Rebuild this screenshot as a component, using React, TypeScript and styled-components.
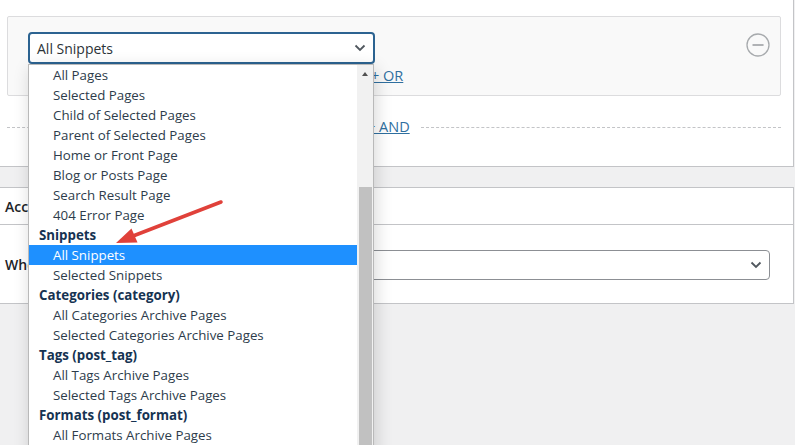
import styled, { createGlobalStyle } from 'styled-components';

type OptionItem = {
  label: string;
  group?: boolean;
  selected?: boolean;
};

const options: OptionItem[] = [
  { label: 'All Pages' },
  { label: 'Selected Pages' },
  { label: 'Child of Selected Pages' },
  { label: 'Parent of Selected Pages' },
  { label: 'Home or Front Page' },
  { label: 'Blog or Posts Page' },
  { label: 'Search Result Page' },
  { label: '404 Error Page' },
  { label: 'Snippets', group: true },
  { label: 'All Snippets', selected: true },
  { label: 'Selected Snippets' },
  { label: 'Categories (category)', group: true },
  { label: 'All Categories Archive Pages' },
  { label: 'Selected Categories Archive Pages' },
  { label: 'Tags (post_tag)', group: true },
  { label: 'All Tags Archive Pages' },
  { label: 'Selected Tags Archive Pages' },
  { label: 'Formats (post_format)', group: true },
  { label: 'All Formats Archive Pages' },
];

const GlobalStyle = createGlobalStyle`
  html, body {
    margin: 0;
    padding: 0;
  }
  body {
    background: #f0f0f1;
    font-family: 'Open Sans', 'Noto Sans', sans-serif;
    color: #1d2327;
    overflow: hidden;
  }
`;

const Page = styled.div`
  position: relative;
  width: 795px;
  height: 445px;
  overflow: hidden;
`;

const TopPanel = styled.section`
  box-sizing: border-box;
  width: 794px;
  height: 167px;
  padding: 16px 12px 0 7px;
  background: #fff;
  border-right: 1px solid #c3c4c7;
  border-bottom: 1px solid #c3c4c7;
`;

const GroupBox = styled.div`
  box-sizing: border-box;
  height: 80px;
  display: flex;
  justify-content: space-between;
  align-items: flex-start;
  padding: 15px 10px 0 20px;
  background: #f9f9f9;
  border: 1px solid #dcdcde;
  border-radius: 2px;
`;

const RuleColumn = styled.div`
  display: flex;
  flex-direction: column;
  align-items: flex-start;
`;

const SelectWrap = styled.div`
  position: relative;
  width: 347px;
`;

const Select = styled.div<{ $focused?: boolean }>`
  box-sizing: border-box;
  height: ${(p) => (p.$focused ? 32 : 30)}px;
  display: flex;
  align-items: center;
  justify-content: space-between;
  padding: 0 7px 0 7px;
  border: ${(p) => (p.$focused ? '2px solid #2c6391' : '1px solid #8c8f94')};
  border-radius: 4px;
  background: #fff;
  font-size: 14px;
  color: #2c3338;
`;

const Chevron = () => (
  <svg width="12" height="8" viewBox="0 0 12 8">
    <polyline points="1.5,1.5 6,6 10.5,1.5" fill="none" stroke="#50575e" strokeWidth="1.8" />
  </svg>
);

const TextLink = styled.a<{ $offset?: number }>`
  color: #2f6f9f;
  text-decoration: underline;
  font-size: 14.5px;
  line-height: 18px;
  margin-left: ${(p) => p.$offset ?? 0}px;
  white-space: nowrap;
  cursor: pointer;
`;

const OrLink = styled(TextLink)`
  margin-top: 3px;
`;

const MinusButton = styled.button`
  margin-top: 1px;
  padding: 0;
  border: none;
  background: none;
  display: flex;
`;

const AndRow = styled.div`
  margin-top: 21px;
  height: 20px;
  display: flex;
  align-items: center;
`;

const Dash = styled.div<{ $width?: number; $gap?: number }>`
  border-top: 1px dashed #c3c4c7;
  margin-left: ${(p) => p.$gap ?? 0}px;
  ${(p) => (p.$width ? `width: ${p.$width}px;` : 'flex: 1;')}
`;

const LowerPanel = styled.section`
  box-sizing: border-box;
  width: 794px;
  height: 117px;
  margin-top: 20px;
  display: flex;
  flex-direction: column;
  background: #fff;
  border: 1px solid #c3c4c7;
  border-left: none;
`;

const PanelHeader = styled.div`
  box-sizing: border-box;
  height: 37px;
  display: flex;
  align-items: center;
  padding-left: 5px;
  border-bottom: 1px solid #c3c4c7;
  font-size: 14px;
  font-weight: 600;
  color: #1d2327;
`;

const PanelRow = styled.div`
  flex: 1;
  display: flex;
  align-items: center;
  padding: 0 23px 0 5px;
`;

const RowLabel = styled.div`
  width: 190px;
  font-size: 14px;
  font-weight: 600;
  color: #1d2327;
`;

const WideSelect = styled(Select)`
  flex: 1;
  margin-top: 1px;
`;

const Dropdown = styled.div`
  position: absolute;
  top: 100%;
  left: 0;
  z-index: 10;
  box-sizing: border-box;
  width: 346px;
  height: 420px;
  display: flex;
  background: #fff;
  border: 1px solid #b9b9b9;
  box-shadow: 2px 4px 16px rgba(0, 0, 0, 0.16);
`;

const OptionList = styled.ul`
  flex: 1;
  margin: 0;
  padding: 0;
  list-style: none;
`;

const Option = styled.li<{ $group?: boolean; $selected?: boolean }>`
  height: 20px;
  line-height: 20px;
  padding-left: ${(p) => (p.$group ? 10 : 24)}px;
  font-size: 13.3px;
  font-weight: ${(p) => (p.$group ? 700 : 400)};
  color: ${(p) => (p.$selected ? '#fff' : p.$group ? '#163352' : '#2d3c4b')};
  background: ${(p) => (p.$selected ? '#1e90ff' : 'transparent')};
  white-space: nowrap;
`;

const Scrollbar = styled.div`
  width: 16px;
  display: flex;
  flex-direction: column;
  background: #f1f1f1;
`;

const ScrollArrow = styled.div`
  height: 17px;
  display: flex;
  align-items: center;
  justify-content: center;
  &::before {
    content: '';
    border-left: 3.5px solid transparent;
    border-right: 3.5px solid transparent;
    border-bottom: 4px solid #505050;
  }
`;

const ScrollTrack = styled.div`
  flex: 1;
  display: flex;
  padding: 105px 1px 0 2px;
`;

const ScrollThumb = styled.div`
  flex: 1;
  background: #c1c1c1;
`;

const Annotation = styled.svg`
  position: absolute;
  top: 0;
  left: 0;
  z-index: 20;
  pointer-events: none;
`;

export default function App() {
  return (
    <Page>
      <GlobalStyle />
      <TopPanel>
        <GroupBox>
          <RuleColumn>
            <SelectWrap>
              <Select $focused>
                <span>All Snippets</span>
                <Chevron />
              </Select>
              <Dropdown>
                <OptionList>
                  {options.map((o, i) => (
                    <Option key={i} $group={o.group} $selected={o.selected}>
                      {o.label}
                    </Option>
                  ))}
                </OptionList>
                <Scrollbar>
                  <ScrollArrow />
                  <ScrollTrack>
                    <ScrollThumb />
                  </ScrollTrack>
                </Scrollbar>
              </Dropdown>
            </SelectWrap>
            <OrLink $offset={343}>+ OR</OrLink>
          </RuleColumn>
          <MinusButton aria-label="Remove">
            <svg width="24" height="24" viewBox="0 0 24 24">
              <circle cx="12" cy="12" r="11" fill="none" stroke="#a7aaad" strokeWidth="1.3" />
              <line x1="6.5" y1="12" x2="17.5" y2="12" stroke="#a7aaad" strokeWidth="1.8" />
            </svg>
          </MinusButton>
        </GroupBox>
        <AndRow>
          <Dash $width={355} />
          <TextLink $offset={5}>+ AND</TextLink>
          <Dash $gap={11} />
        </AndRow>
      </TopPanel>
      <LowerPanel>
        <PanelHeader>Accessibility</PanelHeader>
        <PanelRow>
          <RowLabel>Where</RowLabel>
          <WideSelect>
            <span />
            <Chevron />
          </WideSelect>
        </PanelRow>
      </LowerPanel>
      <Annotation width="795" height="445" viewBox="0 0 795 445">
        <line x1="221" y1="202" x2="133" y2="236" stroke="#e0413a" strokeWidth="3.5" strokeLinecap="round" />
        <polygon points="116,243 137.5,242.5 131.5,228.5" fill="#e0413a" />
      </Annotation>
    </Page>
  );
}
